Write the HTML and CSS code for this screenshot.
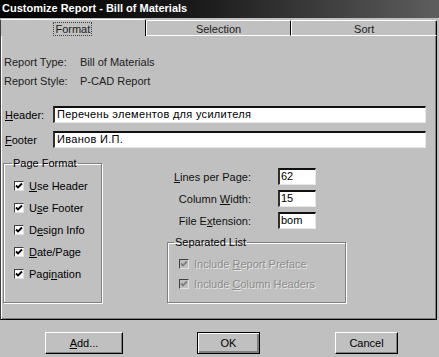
FILE: index.html
```html
<!DOCTYPE html>
<html lang="en">

<head>
    <meta charset="UTF-8">
    <title>Customize Report - Bill of Materials</title>
    <link rel="stylesheet" href="styles.css">
</head>

<body>
    <div class="window">
        <div class="titlebar">Customize Report - Bill of Materials</div>

        <div class="tabs">
            <div class="tab active"><span class="focus">Format</span></div>
            <div class="tab">Selection</div>
            <div class="tab last">Sort</div>
        </div>

        <div class="panel">
            <div class="info">
                <div class="info-row"><span class="info-label">Report Type:</span><span>Bill of Materials</span></div>
                <div class="info-row"><span class="info-label">Report Style:</span><span>P-CAD Report</span></div>
            </div>

            <div class="text-row first">
                <label class="text-label"><u>H</u>eader:</label>
                <div class="textbox wide">Перечень элементов для усилителя</div>
            </div>
            <div class="text-row">
                <label class="text-label"><u>F</u>ooter</label>
                <div class="textbox wide">Иванов И.П.</div>
            </div>

            <div class="lower">
                <fieldset class="group page-format">
                    <legend>Page Format</legend>
                    <div class="check-row">
                        <span class="checkbox"><svg width="8" height="8" viewBox="0 0 8 8"><polyline points="1,3.5 3,5.5 7,1.5" /></svg></span>
                        <span><u>U</u>se Header</span>
                    </div>
                    <div class="check-row">
                        <span class="checkbox"><svg width="8" height="8" viewBox="0 0 8 8"><polyline points="1,3.5 3,5.5 7,1.5" /></svg></span>
                        <span>U<u>s</u>e Footer</span>
                    </div>
                    <div class="check-row">
                        <span class="checkbox"><svg width="8" height="8" viewBox="0 0 8 8"><polyline points="1,3.5 3,5.5 7,1.5" /></svg></span>
                        <span>D<u>e</u>sign Info</span>
                    </div>
                    <div class="check-row">
                        <span class="checkbox"><svg width="8" height="8" viewBox="0 0 8 8"><polyline points="1,3.5 3,5.5 7,1.5" /></svg></span>
                        <span><u>D</u>ate/Page</span>
                    </div>
                    <div class="check-row">
                        <span class="checkbox"><svg width="8" height="8" viewBox="0 0 8 8"><polyline points="1,3.5 3,5.5 7,1.5" /></svg></span>
                        <span>Pagi<u>n</u>ation</span>
                    </div>
                </fieldset>

                <div class="right-col">
                    <div class="field-grid">
                        <label class="field-label"><u>L</u>ines per Page:</label>
                        <div class="textbox small">62</div>
                        <label class="field-label">Column <u>W</u>idth:</label>
                        <div class="textbox small">15</div>
                        <label class="field-label">File E<u>x</u>tension:</label>
                        <div class="textbox small">bom</div>
                    </div>

                    <fieldset class="group separated">
                        <legend>Separated List</legend>
                        <div class="check-row disabled">
                            <span class="checkbox"><svg width="8" height="8" viewBox="0 0 8 8"><polyline points="1,3.5 3,5.5 7,1.5" /></svg></span>
                            <span>Include <u>R</u>eport Preface</span>
                        </div>
                        <div class="check-row disabled">
                            <span class="checkbox"><svg width="8" height="8" viewBox="0 0 8 8"><polyline points="1,3.5 3,5.5 7,1.5" /></svg></span>
                            <span>Include <u>C</u>olumn Headers</span>
                        </div>
                    </fieldset>
                </div>
            </div>
        </div>

        <div class="buttons">
            <button class="btn add"><u>A</u>dd...</button>
            <button class="btn ok">OK</button>
            <button class="btn cancel">Cancel</button>
        </div>
    </div>
</body>

</html>
```

FILE: styles.css
```css
body {
    margin: 0;
    background-color: #c0c0c0;
    font-family: "Liberation Sans", Arial, sans-serif;
    font-size: 11px;
    color: #000;
}

.window {
    width: 439px;
    height: 357px;
    background-color: #c0c0c0;
    overflow: hidden;
}

.titlebar {
    height: 18px;
    line-height: 17px;
    padding-left: 2px;
    background: linear-gradient(to right, #000 0%, #1a1a1a 45%, #5e5e5e 100%);
    color: #fff;
    font-weight: bold;
    font-size: 11px;
}

.tabs {
    display: flex;
    height: 18px;
    width: 437px;
}

.tab {
    flex: 1;
    margin-top: 2px;
    border-top: 1px solid #fff;
    border-left: 1px solid #fff;
    border-right: 1px solid #000;
    border-bottom: 1px solid #fff;
    border-radius: 2px 2px 0 0;
    text-align: center;
    line-height: 17px;
    color: #202020;
}

.tab.active {
    margin-top: 1px;
    border-left-color: #404040;
    border-bottom: none;
    line-height: 16px;
}

.tab.last {
    box-shadow: inset -1px 0 0 #808080;
}

.focus {
    display: inline-block;
    padding: 0 1px;
    margin-top: 3px;
    line-height: 12px;
    outline: 1px dotted #404040;
}

.panel {
    width: 437px;
    height: 284px;
    box-sizing: border-box;
    border-left: 1px solid #404040;
    border-right: 1px solid #000;
    border-bottom: 1px solid #000;
    box-shadow: inset 1px 0 0 #fff, inset -1px -1px 0 #808080;
    padding: 19px 0 0 3px;
}

.info-row {
    display: flex;
    height: 14px;
    line-height: 14px;
    margin-bottom: 5px;
    color: #202020;
}

.info-label {
    width: 76px;
}

.text-row {
    display: flex;
    align-items: center;
    height: 17px;
    margin-top: 8px;
}

.text-row.first {
    margin-top: 18px;
}

.text-label {
    width: 49px;
    padding-left: 1px;
    box-sizing: border-box;
}

.textbox {
    height: 17px;
    box-sizing: border-box;
    background-color: #fff;
    border-top: 2px solid #101010;
    border-left: 2px solid #303030;
    border-right: 1px solid #e8e8e8;
    border-bottom: 1px solid #e8e8e8;
    padding-left: 2px;
    line-height: 13px;
}

.textbox.wide {
    width: 373px;
    letter-spacing: 0.3px;
}

.textbox.small {
    width: 38px;
    padding-left: 1px;
}

.lower {
    display: flex;
    margin-top: 8px;
}

.group {
    margin: 0;
    border: 1px solid #808080;
    box-shadow: inset 1px 1px 0 #fff, 1px 1px 0 #fff;
}

.group legend {
    padding: 0 1px;
    line-height: 14px;
}

.page-format {
    width: 99px;
    box-sizing: border-box;
    margin-left: -1px;
    padding: 9px 0 5px 8px;
}

.check-row {
    display: flex;
    align-items: center;
    height: 14px;
    line-height: 14px;
    margin-bottom: 8px;
}

.check-row:last-child {
    margin-bottom: 0;
}

.page-format .check-row {
    margin-left: 2px;
}

.checkbox {
    width: 10px;
    height: 10px;
    box-sizing: border-box;
    background-color: #fff;
    border-top: 1px solid #404040;
    border-left: 1px solid #404040;
    border-right: 1px solid #e0e0e0;
    border-bottom: 1px solid #e0e0e0;
    margin-right: 5px;
    display: flex;
    align-items: center;
    justify-content: center;
}

.checkbox polyline {
    fill: none;
    stroke: #000;
    stroke-width: 1.8;
}

.check-row.disabled {
    color: #8c8c8c;
    text-shadow: 1px 1px 0 #e8e8e8;
}

.check-row.disabled .checkbox {
    background-color: #c0c0c0;
}

.check-row.disabled polyline {
    stroke: #808080;
}

.right-col {
    margin-left: 65px;
    padding-top: 12px;
    width: 179px;
}

.field-grid {
    display: grid;
    grid-template-columns: 84px 38px;
    column-gap: 27px;
    row-gap: 5px;
    align-items: center;
}

.field-label {
    text-align: right;
    color: #101010;
}

.separated {
    width: 179px;
    box-sizing: border-box;
    margin-top: 6px;
    padding: 8px 0 11px 6px;
}

.separated .check-row {
    margin-left: 5px;
    margin-bottom: 6px;
}

.separated .check-row:last-child {
    margin-bottom: 0;
}

.buttons {
    display: flex;
    padding: 12px 0 0 45px;
}

.btn {
    height: 22px;
    box-sizing: border-box;
    margin: 0;
    padding: 0;
    background-color: #c0c0c0;
    font-family: "Liberation Sans", Arial, sans-serif;
    font-size: 11px;
    color: #000;
    border-top: 1px solid #fff;
    border-left: 1px solid #fff;
    border-right: 1px solid #000;
    border-bottom: 1px solid #000;
    box-shadow: inset -1px -1px 0 #808080;
}

.add {
    width: 78px;
}

.ok {
    width: 63px;
    margin-left: 74px;
    border: 1px solid #000;
    box-shadow: inset 1px 1px 0 #fff, inset -2px -2px 0 #808080;
}

.cancel {
    width: 63px;
    margin-left: 75px;
}
```
